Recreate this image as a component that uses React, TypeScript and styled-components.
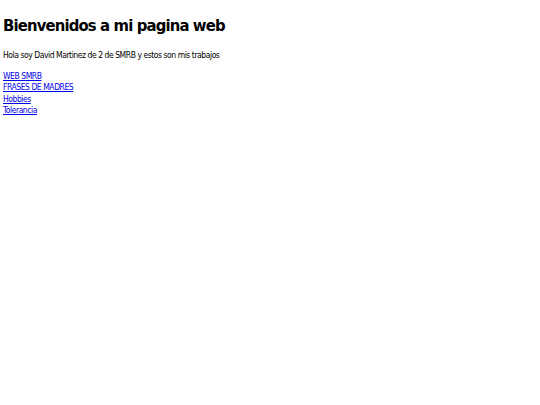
import React from 'react';
import styled, { createGlobalStyle } from 'styled-components';

const GlobalStyle = createGlobalStyle`
  html, body {
    margin: 0;
    padding: 0;
    background: #ffffff;
  }
  body {
    padding: 3px;
    font-family: "DejaVu Sans Condensed", "DejaVu Sans", sans-serif;
    color: #000;
  }
`;

const Title = styled.h1`
  font-size: 16.5px;
  font-weight: bold;
  letter-spacing: -0.85px;
  margin: 13px 0 15px;
`;

const Intro = styled.p`
  font-size: 8.5px;
  letter-spacing: -0.45px;
  margin: 0 0 10.6px;
`;

const LinkList = styled.div`
  display: flex;
  flex-direction: column;
  font-size: 8.5px;
  letter-spacing: -0.45px;
  line-height: 11.5px;
`;

const Link = styled.a`
  color: #0000ee;
  text-decoration: underline;
  align-self: flex-start;
`;

const links = ['WEB SMRB', 'FRASES DE MADRES', 'Hobbies', 'Tolerancia'];

export default function App() {
  return (
    <>
      <GlobalStyle />
      <Title>Bienvenidos a mi pagina web</Title>
      <Intro>Hola soy David Martinez de 2 de SMRB y estos son mis trabajos</Intro>
      <LinkList>
        {links.map((l) => (
          <Link key={l} href="#">
            {l}
          </Link>
        ))}
      </LinkList>
    </>
  );
}
